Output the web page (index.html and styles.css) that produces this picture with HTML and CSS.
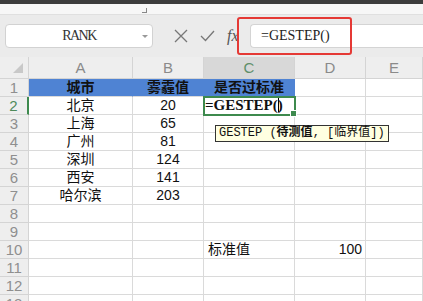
FILE: index.html
```html
<!DOCTYPE html>
<html lang="zh-CN">
<head>
    <meta charset="UTF-8" />
    <title>GESTEP</title>
    <link rel="stylesheet" href="styles.css">
</head>
<body>
    <div class="titlebar"></div>
    <div class="ribbon-edge"><span class="corner"></span></div>

    <div class="formula-bar">
        <div class="name-box">
            <span class="name">RANK</span>
            <span class="caret"></span>
        </div>
        <div class="fb-icons">
            <svg width="14" height="14" viewBox="0 0 14 14"><path d="M1 1 L13 13 M13 1 L1 13" stroke="#777" stroke-width="1.3" fill="none"/></svg>
            <svg width="15" height="12" viewBox="0 0 15 12"><path d="M1 6 L5.5 10.5 L14 1" stroke="#777" stroke-width="1.3" fill="none"/></svg>
            <span class="fx">fx</span>
        </div>
        <div class="formula-input">=GESTEP()</div>
        <div class="highlight"></div>
    </div>

    <div class="sheet">
        <div class="row col-head">
            <div class="corner-cell"><span class="tri"></span></div>
            <div>A</div><div>B</div><div class="sel">C</div><div>D</div><div>E</div>
        </div>
        <div class="row">
            <div class="rh">1</div>
            <div class="blue">城市</div><div class="blue">雾霾值</div><div class="blue">是否过标准</div><div></div><div></div>
        </div>
        <div class="row">
            <div class="rh sel">2</div>
            <div>北京</div><div>20</div><div class="active">=GESTEP(<span class="cursor"></span>)</div><div></div><div></div>
        </div>
        <div class="row">
            <div class="rh">3</div>
            <div>上海</div><div>65</div><div></div><div></div><div></div>
        </div>
        <div class="row">
            <div class="rh">4</div>
            <div>广州</div><div>81</div><div></div><div></div><div></div>
        </div>
        <div class="row">
            <div class="rh">5</div>
            <div>深圳</div><div>124</div><div></div><div></div><div></div>
        </div>
        <div class="row">
            <div class="rh">6</div>
            <div>西安</div><div>141</div><div></div><div></div><div></div>
        </div>
        <div class="row">
            <div class="rh">7</div>
            <div>哈尔滨</div><div>203</div><div></div><div></div><div></div>
        </div>
        <div class="row">
            <div class="rh">8</div>
            <div></div><div></div><div></div><div></div><div></div>
        </div>
        <div class="row">
            <div class="rh">9</div>
            <div></div><div></div><div></div><div></div><div></div>
        </div>
        <div class="row">
            <div class="rh">10</div>
            <div></div><div></div><div class="left">标准值</div><div class="right">100</div><div></div>
        </div>
        <div class="row">
            <div class="rh">11</div>
            <div></div><div></div><div></div><div></div><div></div>
        </div>
        <div class="row">
            <div class="rh">12</div>
            <div></div><div></div><div></div><div></div><div></div>
        </div>
        <div class="row">
            <div class="rh">13</div>
            <div></div><div></div><div></div><div></div><div></div>
        </div>

        <div class="tooltip">GESTEP (<b>待测值</b>, [临界值])</div>
    </div>
</body>
</html>
```

FILE: styles.css
```css
* {
    box-sizing: border-box;
    margin: 0;
    padding: 0;
}

body {
    width: 423px;
    height: 301px;
    overflow: hidden;
    background: #fff;
    font-family: "Liberation Sans", "Noto Sans CJK SC", sans-serif;
}

.titlebar {
    height: 4px;
    background: #3d3d3d;
}

.ribbon-edge {
    height: 11px;
    background: #f7f7f7;
    border-bottom: 1px solid #e0e0e0;
    position: relative;
}

.corner {
    position: absolute;
    left: 142px;
    top: 4px;
    width: 5px;
    height: 5px;
    border-right: 1px solid #888;
    border-bottom: 1px solid #888;
}

.formula-bar {
    height: 42px;
    background: #ebebeb;
    display: flex;
    align-items: center;
    padding-left: 5px;
    position: relative;
}

.name-box {
    width: 148px;
    height: 24px;
    background: #fff;
    border: 1px solid #d2d2d2;
    border-radius: 4px;
    display: flex;
    align-items: center;
    position: relative;
}

.name {
    flex: 1;
    text-align: center;
    font-family: "Liberation Serif", serif;
    font-size: 14px;
    letter-spacing: -1.5px;
    color: #333;
}

.caret {
    position: absolute;
    right: 4px;
    top: 10px;
    border-left: 3px solid transparent;
    border-right: 3px solid transparent;
    border-top: 3px solid #999;
}

.fb-icons {
    display: flex;
    align-items: center;
    gap: 12px;
    margin-left: 21px;
    width: 76px;
}

.fx {
    font-family: "Liberation Serif", serif;
    font-style: italic;
    font-size: 16px;
    color: #555;
}

.formula-input {
    flex: 1;
    height: 24px;
    background: #fff;
    border: 1px solid #d4d4d4;
    border-right: none;
    border-radius: 4px 0 0 4px;
    padding-left: 10px;
    font-family: "Liberation Serif", serif;
    font-size: 14px;
    line-height: 22px;
    color: #222;
}

.highlight {
    position: absolute;
    left: 237px;
    top: 2px;
    width: 115px;
    height: 38px;
    border: 2.5px solid #e53935;
    border-radius: 3px;
}

.sheet {
    position: relative;
}

.row {
    display: grid;
    grid-template-columns: 29px 104px 71px 91px 71px 1fr;
    height: 18px;
}

.row > div {
    border-right: 1px solid #dadada;
    border-bottom: 1px solid #dadada;
    text-align: center;
    font-size: 14px;
    line-height: 17px;
    color: #111;
    white-space: nowrap;
}

.col-head {
    height: 22px;
}

.col-head > div {
    background: #eeeeee;
    color: #8a8a8a;
    font-size: 15px;
    line-height: 21px;
    border-color: #d4d4d4;
}

.col-head > div.sel {
    background: #d8d8d8;
    color: #5f8f6a;
}

.corner-cell {
    position: relative;
}

.tri {
    position: absolute;
    right: 5px;
    bottom: 5px;
    border-left: 10px solid transparent;
    border-bottom: 10px solid #c8c8c8;
}

.row > .rh {
    background: #eeeeee;
    color: #8f8f8f;
    font-size: 15px;
    border-color: #d4d4d4;
}

.row > .rh.sel {
    color: #4f8a5a;
    border-right: 2px solid #3e8a4e;
}

.row > .blue {
    background: #4f83d3;
    border-right-color: #4f83d3;
    font-weight: bold;
    color: #111;
}

.row > .active {
    position: relative;
    text-align: left;
    padding-left: 1px;
    font-family: "Liberation Serif", serif;
    font-weight: bold;
    font-size: 15px;
    outline: 2px solid #3e8a4e;
    outline-offset: -1px;
    z-index: 1;
}

.active::after {
    content: "";
    position: absolute;
    right: -3px;
    bottom: -3px;
    width: 5px;
    height: 5px;
    background: #3e8a4e;
    border: 1px solid #fff;
}

.cursor {
    display: inline-block;
    width: 1px;
    height: 14px;
    background: #000;
    vertical-align: -2px;
    margin: 0 -1px 0 0;
}

.row > .left {
    text-align: left;
    padding-left: 4px;
}

.row > .right {
    text-align: right;
    padding-right: 3px;
}

.tooltip {
    position: absolute;
    left: 215px;
    top: 68px;
    height: 17px;
    padding: 0 3px;
    background: #ffffe1;
    border: 1px solid #333;
    font-family: "Liberation Mono", "Noto Sans CJK SC", monospace;
    font-size: 12px;
    line-height: 15px;
    color: #111;
    z-index: 2;
    white-space: nowrap;
}
```
